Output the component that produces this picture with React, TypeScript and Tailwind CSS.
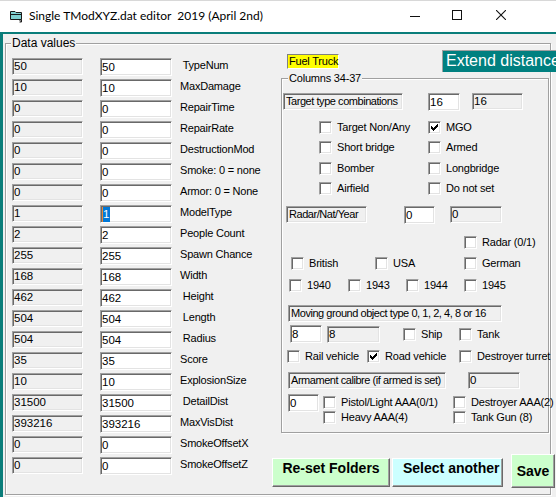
import React from "react";

const SUNKEN =
  "border border-t-[#a0a0a0] border-l-[#a0a0a0] border-r-white border-b-white shadow-[inset_1px_1px_0_#696969,inset_-1px_-1px_0_#e3e3e3]";
const RAISED =
  "border border-t-white border-l-white border-r-[#696969] border-b-[#696969] shadow-[inset_-1px_-1px_0_#a0a0a0]";
const LBL = "text-[11px] leading-[13px] tracking-[-0.2px] whitespace-pre";

function RO({ v, cls }: { v: string; cls: string }) {
  return (
    <div className={`${SUNKEN} bg-[#f0f0f0] h-[17px] shrink-0 pl-[1px] text-[11.5px] leading-[15px] overflow-hidden whitespace-nowrap ${cls}`}>
      {v}
    </div>
  );
}

function ED({ v, cls, sel }: { v: string; cls: string; sel?: boolean }) {
  return (
    <div className={`${SUNKEN} bg-white h-[18px] shrink-0 pl-[1px] pt-[1px] text-[11.5px] leading-[15px] overflow-hidden whitespace-nowrap ${cls}`}>
      {sel ? (
        <span className="bg-[#0078d7] text-white border-l border-[#e8893a] inline-block pr-[1px]">{v}</span>
      ) : (
        v
      )}
    </div>
  );
}

function SL({ t, cls }: { t: string; cls: string }) {
  return (
    <div className={`${SUNKEN} bg-[#f0f0f0] h-[17px] shrink-0 pl-[2px] text-[11px] leading-[15px] tracking-[-0.45px] overflow-hidden whitespace-nowrap ${cls}`}>
      {t}
    </div>
  );
}

function CB({ checked }: { checked?: boolean }) {
  return (
    <span className={`${SUNKEN} bg-white w-[13px] h-[13px] shrink-0 flex items-center justify-center`}>
      {checked && (
        <svg width="7" height="7" viewBox="0 0 7 7">
          <path d="M0 2h1v3h-1z M1 3h1v3h-1z M2 4h1v3h-1z M3 3h1v3h-1z M4 2h1v3h-1z M5 1h1v3h-1z M6 0h1v3h-1z" fill="black" />
        </svg>
      )}
    </span>
  );
}

function CI({ label, checked, cls = "" }: { label: string; checked?: boolean; cls?: string }) {
  return (
    <div className={`flex items-center shrink-0 ${cls}`}>
      <CB checked={checked} />
      <span className={`ml-[5px] ${LBL}`}>{label}</span>
    </div>
  );
}

const rows: [string, string][] = [
  ["50", " TypeNum"],
  ["10", "MaxDamage"],
  ["0", "RepairTime"],
  ["0", "RepairRate"],
  ["0", "DestructionMod"],
  ["0", "Smoke: 0 = none"],
  ["0", "Armor: 0 = None"],
  ["1", "ModelType"],
  ["2", "People Count"],
  ["255", "Spawn Chance"],
  ["168", "Width"],
  ["462", " Height"],
  ["504", " Length"],
  ["504", " Radius"],
  ["35", "Score"],
  ["10", "ExplosionSize"],
  ["31500", " DetailDist"],
  ["393216", "MaxVisDist"],
  ["0", "SmokeOffsetX"],
  ["0", "SmokeOffsetZ"],
];

function TitleBar() {
  return (
    <div className="h-[32px] bg-white flex items-start border-t border-[#d8d8d8]">
      <svg className="ml-[10px] mt-[9px] shrink-0" width="13" height="13" viewBox="0 0 13 13">
        <path d="M0.5 1.5 H5 L6 2.5 H11.5 V9.5 H0.5 Z" fill="#7fd0d0" stroke="#1a1a1a" strokeWidth="1" />
        <path d="M1 4.5 H11" stroke="#1a1a1a" strokeWidth="1" />
        <path d="M9 9.5 L11.5 12 M11.5 9.5 V12 H9.5" stroke="#1a1a1a" strokeWidth="1" fill="none" />
      </svg>
      <span className="ml-[6px] mt-[7px] font-['Lato',sans-serif] text-[12px] leading-[15px] whitespace-pre text-black">
        Single TModXYZ.dat editor  2019 (April 2nd)
      </span>
      <div className="ml-auto mr-[50px] flex items-start">
        <svg className="mt-[15px]" width="10" height="1" viewBox="0 0 10 1">
          <rect width="10" height="1" fill="#111" />
        </svg>
        <svg className="ml-[32px] mt-[9px]" width="10" height="10" viewBox="0 0 10 10">
          <rect x="0.5" y="0.5" width="9" height="9" fill="none" stroke="#111" strokeWidth="1" />
        </svg>
        <svg className="ml-[34px] mt-[9px]" width="10" height="10" viewBox="0 0 10 10">
          <path d="M0 0 L10 10 M10 0 L0 10" stroke="#111" strokeWidth="1.1" />
        </svg>
      </div>
    </div>
  );
}

function LeftColumn() {
  return (
    <div className="w-[266px] shrink-0 pt-[14px] pl-[6px] flex flex-col gap-[3px]">
      {rows.map(([v, l], i) => (
        <div key={i} className="flex items-start h-[18px]">
          <RO v={v} cls="w-[71px]" />
          <ED v={v} cls="w-[72px] ml-[17px]" sel={i === 7} />
          <div className="ml-[8px] text-[11px] leading-[15px] tracking-[-0.2px] whitespace-pre">{l}</div>
        </div>
      ))}
    </div>
  );
}

function RightColumn() {
  return (
    <div className="flex-1 flex flex-col">
      <div className="flex items-start h-[34px]">
        <div className="ml-[15px] mt-[10px] w-[52px] h-[15px] shrink-0 bg-[#ffff00] border border-t-[#808080] border-l-[#808080] border-r-white border-b-white pl-[1px] text-[11px] leading-[13px] tracking-[-0.2px] whitespace-nowrap">
          Fuel Truck
        </div>
        <div className="ml-[103px] mt-[6px] w-[130px] h-[22px] shrink-0 bg-[#008080] border-t border-l border-[#a0a0a0] pl-[3px] text-white text-[16px] leading-[20px] whitespace-nowrap">
          Extend distance
        </div>
      </div>

      <div className="relative ml-[9px] w-[268px] h-[355px] shrink-0 border border-[#a0a0a0] shadow-[inset_1px_1px_0_#fff,1px_1px_0_#fff] flex flex-col">
        <span className={`absolute left-[6px] -top-[7px] px-[1px] bg-[#f0f0f0] ${LBL}`}>Columns 34-37</span>

        <div className="mt-[14px] flex items-start h-[18px]">
          <SL t="Target type combinations" cls="ml-[1px] w-[120px]" />
          <ED v="16" cls="ml-[25px] w-[32px]" />
          <RO v="16" cls="ml-[12px] w-[51px]" />
        </div>

        <div className="mt-[6px] h-[20px] flex items-center">
          <CI label="Target Non/Any" cls="ml-[37px] w-[109px]" />
          <CI label="MGO" checked />
        </div>
        <div className="h-[20px] flex items-center">
          <CI label="Short bridge" cls="ml-[37px] w-[109px]" />
          <CI label="Armed" />
        </div>
        <div className="mt-[1px] h-[20px] flex items-center">
          <CI label="Bomber" cls="ml-[37px] w-[109px]" />
          <CI label="Longbridge" />
        </div>
        <div className="h-[20px] flex items-center">
          <CI label="Airfield" cls="ml-[37px] w-[109px]" />
          <CI label="Do not set" />
        </div>

        <div className="mt-[8px] flex items-start h-[18px]">
          <SL t="Radar/Nat/Year" cls="ml-[4px] w-[81px]" />
          <ED v="0" cls="ml-[37px] w-[31px]" />
          <RO v="0" cls="ml-[15px] w-[52px]" />
        </div>

        <div className="mt-[8px] h-[20px] flex items-center">
          <CI label="Radar (0/1)" cls="ml-[182px]" />
        </div>
        <div className="mt-[1px] h-[20px] flex items-center">
          <CI label="British" cls="ml-[9px] w-[84px]" />
          <CI label="USA" cls="w-[89px]" />
          <CI label="German" />
        </div>
        <div className="mt-[2px] h-[20px] flex items-center">
          <CI label="1940" cls="ml-[7px] w-[59px]" />
          <CI label="1943" cls="w-[58px]" />
          <CI label="1944" cls="w-[58px]" />
          <CI label="1945" />
        </div>

        <div className="mt-[10px] flex">
          <SL t="Moving ground object type 0, 1, 2, 4, 8 or 16" cls="ml-[6px] w-[214px]" />
        </div>

        <div className="mt-[3px] h-[18px] flex items-center">
          <ED v="8" cls="ml-[8px] w-[32px]" />
          <RO v="8" cls="ml-[5px] w-[53px]" />
          <CI label="Ship" cls="ml-[23px] w-[56px]" />
          <CI label="Tank" />
        </div>

        <div className="mt-[3px] h-[20px] flex items-center">
          <CI label="Rail vehicle" cls="ml-[5px] w-[80px]" />
          <CI label="Road vehicle" checked cls="w-[92px]" />
          <CI label="Destroyer turret" />
        </div>

        <div className="mt-[6px] flex items-start h-[17px]">
          <SL t="Armament calibre (if armed is set)" cls="ml-[6px] w-[158px]" />
          <RO v="0" cls="ml-[22px] w-[52px]" />
        </div>

        <div className="mt-[5px] flex items-start">
          <ED v="0" cls="ml-[6px] w-[31px]" />
          <div className="ml-[4px] mt-[1px] flex flex-col">
            <div className="h-[15px] flex items-center">
              <CI label="Pistol/Light AAA(0/1)" cls="w-[130px]" />
              <CI label="Destroyer AAA(2)" />
            </div>
            <div className="h-[15px] flex items-center">
              <CI label="Heavy AAA(4)" cls="w-[130px]" />
              <CI label="Tank Gun (8)" />
            </div>
          </div>
        </div>
      </div>

      <div className="flex items-start">
        <div className={`${RAISED} mt-[25px] w-[118px] h-[29px] shrink-0 bg-[#ccffcc] pt-[1px] text-center font-bold text-[14px] leading-[16px] whitespace-nowrap overflow-hidden`}>
          Re-set Folders
        </div>
        <div className={`${RAISED} mt-[25px] ml-[2px] w-[111px] h-[29px] shrink-0 bg-[#ccffff] pt-[1px] pl-[10px] font-bold text-[14px] leading-[16px] whitespace-nowrap overflow-hidden`}>
          Select another
        </div>
        <div className={`${RAISED} mt-[21px] ml-[8px] w-[44px] h-[34px] shrink-0 bg-[#ccffcc] pt-[8px] text-center font-bold text-[14px] leading-[16px] whitespace-nowrap overflow-hidden`}>
          Save
        </div>
      </div>
    </div>
  );
}

export default function App() {
  return (
    <div className="w-[556px] h-[497px] overflow-hidden bg-[#f0f0f0] font-['Liberation_Sans',Arial,sans-serif] text-black">
      <TitleBar />
      <div className="h-[2px] bg-[#0a7d7a]" />
      <div className="flex h-[463px]">
        <div className="w-[3px] bg-[#0a7d7a] shrink-0" />
        <div className="relative ml-[2px] mt-[9px] w-[546px] h-[452px] shrink-0 border border-[#a0a0a0] shadow-[inset_1px_1px_0_#fff,1px_1px_0_#fff] flex">
          <span className="absolute left-[5px] -top-[8px] px-[1px] bg-[#f0f0f0] text-[12px] leading-[14px] whitespace-nowrap">
            Data values
          </span>
          <LeftColumn />
          <RightColumn />
        </div>
      </div>
    </div>
  );
}
